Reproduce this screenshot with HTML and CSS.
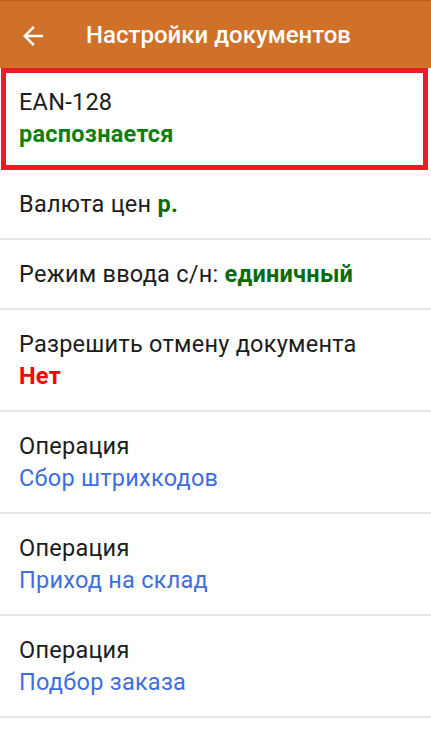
FILE: index.html
```html
<!DOCTYPE html>
<html lang="ru">
<head>
  <meta charset="UTF-8">
  <title>Настройки документов</title>
  <link rel="stylesheet" href="styles.css">
</head>
<body>

  <header class="appbar">
    <svg class="back" viewBox="0 0 24 24" width="30" height="30">
      <path d="M20 11H7.83l5.59-5.59L12 4l-8 8 8 8 1.41-1.41L7.83 13H20v-2z" fill="#fff"/>
    </svg>
    <h1>Настройки документов</h1>
  </header>

  <div class="lista">
    <div class="item destaque">
      <div>EAN-128</div>
      <div class="verde">распознается</div>
    </div>

    <div class="item">
      <div>Валюта цен <span class="verde-escuro">р.</span></div>
    </div>

    <div class="item">
      <div>Режим ввода с/н: <span class="verde-escuro">единичный</span></div>
    </div>

    <div class="item">
      <div>Разрешить отмену документа</div>
      <div class="vermelho">Нет</div>
    </div>

    <div class="item">
      <div>Операция</div>
      <div class="azul">Сбор штрихкодов</div>
    </div>

    <div class="item">
      <div>Операция</div>
      <div class="azul">Приход на склад</div>
    </div>

    <div class="item">
      <div>Операция</div>
      <div class="azul">Подбор заказа</div>
    </div>
  </div>

</body>
</html>
```

FILE: styles.css
```css
body {
  margin: 0;
  font-family: Roboto, "Noto Sans", sans-serif;
  background-color: #fff;
  color: #1c1c1c;
}

.appbar {
  height: 68px;
  border-top: 1px solid #c05e1c;
  background-color: #d0712a;
  display: flex;
  align-items: center;
  padding-left: 18px;
  box-sizing: border-box;
}

.back {
  display: block;
  margin-top: 2px;
}

.appbar h1 {
  margin: 0 0 0 38px;
  font-size: 24px;
  font-weight: 500;
  color: #fff;
}

.item {
  padding: 18px 20px 18px 19px;
  font-size: 23.5px;
  letter-spacing: 0.25px;
  line-height: 32px;
  border-bottom: 2px solid #e6e6e6;
}

.destaque {
  margin: 0 3px 0 1px;
  padding: 13px 14px 15px 13px;
  border: 5px solid #ed1c24;
}

.verde {
  color: #0e800e;
  font-weight: bold;
}

.verde-escuro {
  color: #0b6a0b;
  font-weight: bold;
}

.vermelho {
  color: #ff0000;
  font-weight: bold;
}

.azul {
  color: #3c6ee0;
}
```
